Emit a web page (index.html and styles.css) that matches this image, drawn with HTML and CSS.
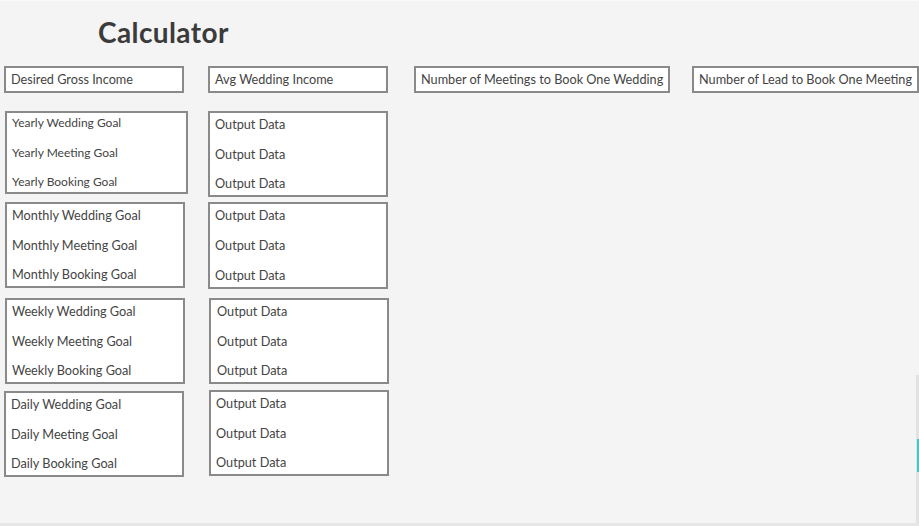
FILE: index.html
```html
<!DOCTYPE html>
<html lang="en">
<head>
<meta charset="utf-8">
<title>Calculator</title>
<link rel="stylesheet" href="styles.css">
</head>
<body>
<div class="page">
  <h1 class="title">Calculator</h1>
  <div class="inputs">
    <div class="field f1">Desired Gross Income</div>
    <div class="field f2">Avg Wedding Income</div>
    <div class="field f3">Number of Meetings to Book One Wedding</div>
    <div class="field f4">Number of Lead to Book One Meeting</div>
  </div>
  <div class="groups">
    <div class="group g-year">
      <div class="box left small">
        <div class="row">Yearly Wedding Goal</div>
        <div class="row">Yearly Meeting Goal</div>
        <div class="row">Yearly Booking Goal</div>
      </div>
      <div class="box right">
        <div class="row">Output Data</div>
        <div class="row">Output Data</div>
        <div class="row">Output Data</div>
      </div>
    </div>
    <div class="group g-month">
      <div class="box left">
        <div class="row">Monthly Wedding Goal</div>
        <div class="row">Monthly Meeting Goal</div>
        <div class="row">Monthly Booking Goal</div>
      </div>
      <div class="box right">
        <div class="row">Output Data</div>
        <div class="row">Output Data</div>
        <div class="row">Output Data</div>
      </div>
    </div>
    <div class="group g-week">
      <div class="box left">
        <div class="row">Weekly Wedding Goal</div>
        <div class="row">Weekly Meeting Goal</div>
        <div class="row">Weekly Booking Goal</div>
      </div>
      <div class="box right">
        <div class="row">Output Data</div>
        <div class="row">Output Data</div>
        <div class="row">Output Data</div>
      </div>
    </div>
    <div class="group g-day">
      <div class="box left">
        <div class="row">Daily Wedding Goal</div>
        <div class="row">Daily Meeting Goal</div>
        <div class="row">Daily Booking Goal</div>
      </div>
      <div class="box right">
        <div class="row">Output Data</div>
        <div class="row">Output Data</div>
        <div class="row">Output Data</div>
      </div>
    </div>
  </div>
  <div class="edge"><span class="edge-mark"></span></div>
</div>
</body>
</html>
```

FILE: styles.css
```css
* { box-sizing: border-box; }
html, body { margin: 0; padding: 0; }
body {
  background: #f4f4f4;
  font-family: Lato, "Open Sans", sans-serif;
  color: #444;
}
.page {
  position: relative;
  width: 919px;
  height: 526px;
  border-top: 1px solid #fafafa;
  border-bottom: 3px solid #e6e6e6;
  overflow: hidden;
}
.title {
  margin: 0;
  padding: 15px 0 0 98px;
  font-size: 28px;
  line-height: 32px;
  font-weight: 700;
  color: #3b3b3b;
  letter-spacing: 0.4px;
}
.inputs {
  display: flex;
  margin-top: 18px;
  padding-left: 4px;
}
.field {
  height: 27px;
  border: 2px solid #8a8a8a;
  background: #fff;
  font-size: 12.7px;
  line-height: 23px;
  padding-left: 5px;
  white-space: nowrap;
  color: #444;
}
.f1 { width: 180px; }
.f2 { width: 180px; margin-left: 24px; }
.f3 { width: 256px; margin-left: 26px; }
.f4 { width: 227px; margin-left: 22px; }
.groups {
  display: flex;
  flex-direction: column;
  margin-top: 18px;
  gap: 9px;
}
.group {
  display: flex;
  align-items: flex-start;
}
.box {
  border: 2px solid #8a8a8a;
  background: #fff;
  display: flex;
  flex-direction: column;
  justify-content: space-between;
  font-size: 12.7px;
  color: #444;
  white-space: nowrap;
}
.row { line-height: 23px; height: 23px; padding-left: 5px; }
.box.small { font-size: 12px; }
.box.small .row { line-height: 20px; height: 20px; }

.g-year .left { margin-left: 5px; width: 183px; height: 83px; }
.g-year .right { margin-left: 20px; width: 180px; height: 86px; }
.g-month { margin-top: -4px; }
.g-month .left { margin-left: 5px; width: 180px; height: 86px; }
.g-month .right { margin-left: 23px; width: 180px; height: 87px; }
.g-week .left { margin-left: 5px; width: 180px; height: 86px; }
.g-week .right { margin-left: 24px; width: 180px; height: 86px; padding-left: 1px; }
.g-day { margin-top: -3px; }
.g-day .left { margin-left: 4px; width: 180px; height: 86px; margin-top: 1px; }
.g-day .right { margin-left: 25px; width: 180px; height: 86px; }

.edge {
  position: absolute;
  right: 0;
  top: 374px;
  width: 3px;
  height: 152px;
  background: #e2e2e2;
}
.edge-mark {
  position: absolute;
  left: 1px;
  top: 64px;
  width: 2px;
  height: 33px;
  background: #3fc9c9;
}
```
